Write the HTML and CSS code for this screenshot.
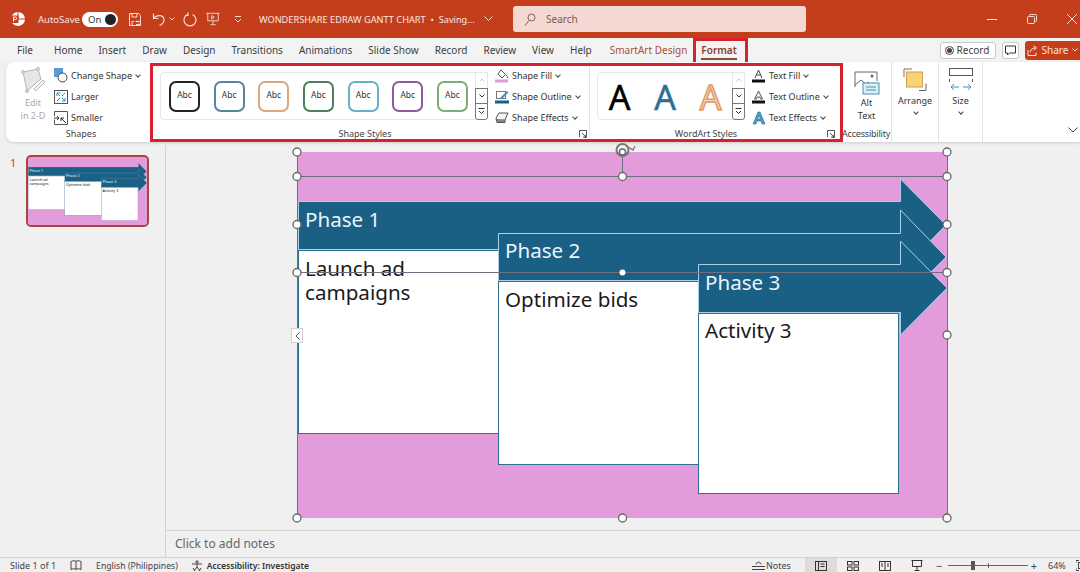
FILE: index.html
```html
<!DOCTYPE html>
<html>
<head>
    <title>WONDERSHARE EDRAW GANTT CHART</title>
    <link rel="stylesheet" href="styles.css">
</head>
<body>
    <header class="titlebar">
        <svg class="app-logo" width="16" height="16" viewBox="0 0 16 16"><circle cx="8" cy="8" r="7" fill="#fff"/><path d="M8 1v7h7" fill="none" stroke="#c43e1c" stroke-width="1"/><rect x="1" y="4.5" width="7.5" height="7.5" rx="1" fill="#c43e1c"/><path d="M3.5 10.5v-4.5h1.8a1.2 1.2 0 0 1 0 2.6h-1.8" fill="none" stroke="#fff" stroke-width="1"/></svg>
        <span class="autosave">AutoSave</span>
        <div class="toggle"><span>On</span><i></i></div>
        <svg class="qa qa-save" width="14" height="15" viewBox="0 0 14 15" fill="none" stroke="#f6ddd6"><path d="M1.5 1.5h9l2 2v10h-11z"/><path d="M4 1.5v3.5h5v-3.5M4 13.5v-4h2"/><path d="M8 9.5h4M8 12.5h4M9 8.5l-1 1 1 1M11 11.5l1 1-1 1"/></svg>
        <svg class="qa qa-undo" width="14" height="14" viewBox="0 0 14 14" fill="none" stroke="#f6ddd6" stroke-width="1.2"><path d="M1.5 1.5v5h5"/><path d="M1.5 6.5c3-4 10-4 10.500 1 .2 2.500-2.500 5-4.500 6"/></svg>
        <svg class="qa-caret" width="6" height="4" viewBox="0 0 6 4" fill="none" stroke="#f6ddd6"><path d="M.5 .5l2.500 2.500 2.500-2.500"/></svg>
        <svg class="qa qa-redo" width="14" height="15" viewBox="0 0 14 15" fill="none" stroke="#f6ddd6" stroke-width="1.2"><path d="M4.500 2.500a6 6 0 1 0 5 0"/><path d="M5 .5v3h-3"/></svg>
        <svg class="qa qa-show" width="14" height="16" viewBox="0 0 16 16" fill="none" stroke="#f6ddd6"><path d="M.5 1.500h15M2 1.500v8.500h12v-8.500M8 10v4M5 14.500h6"/><path d="M6.500 4l3 2-3 2z"/></svg>
        <svg class="qa qa-more" width="8" height="7" viewBox="0 0 8 7" fill="none" stroke="#f6ddd6"><path d="M1 .5h6M1 3l3 3 3-3"/></svg>
        <span class="doc-title">WONDERSHARE EDRAW GANTT CHART &nbsp;•&nbsp; Saving...</span>
        <svg class="title-caret" width="9" height="6" viewBox="0 0 9 6" fill="none" stroke="#f6ddd6"><path d="M.5 .5l4 4 4-4"/></svg>
        <div class="searchbox">
            <svg width="12" height="13" viewBox="0 0 12 13" fill="none" stroke="#8a5a50"><circle cx="7.500" cy="4.500" r="3.500"/><path d="M5 7.500l-4 5"/></svg>
            <span>Search</span>
        </div>
        <div class="win-controls">
            <svg width="10" height="10" viewBox="0 0 10 10" stroke="#f6ddd6" fill="none"><path d="M0 5.500h10"/></svg>
            <svg width="10" height="10" viewBox="0 0 10 10" stroke="#f6ddd6" fill="none"><rect x=".5" y="2.500" width="7" height="7" rx="1"/><path d="M2.500 2.500v-1a1 1 0 0 1 1-1h5a1 1 0 0 1 1 1v5a1 1 0 0 1-1 1h-1"/></svg>
            <svg width="10" height="10" viewBox="0 0 10 10" stroke="#f6ddd6" fill="none"><path d="M0 0l10 10M10 0l-10 10"/></svg>
        </div>
    </header>

    <nav class="tabs">
        <span class="tab tab-file">File</span>
        <span class="tab">Home</span>
        <span class="tab">Insert</span>
        <span class="tab">Draw</span>
        <span class="tab">Design</span>
        <span class="tab">Transitions</span>
        <span class="tab">Animations</span>
        <span class="tab">Slide Show</span>
        <span class="tab">Record</span>
        <span class="tab">Review</span>
        <span class="tab">View</span>
        <span class="tab">Help</span>
        <span class="tab tab-context">SmartArt Design</span>
        <span class="tab tab-format"><b>Format</b></span>
        <div class="tab-actions">
            <div class="btn-record"><i></i>Record</div>
            <div class="btn-comment"><svg width="11" height="11" viewBox="0 0 11 11" fill="none" stroke="#333"><path d="M.5 1h10v7h-6l-2 2v-2h-2z"/></svg></div>
            <div class="btn-share">
                <svg width="11" height="11" viewBox="0 0 11 11" fill="none" stroke="#fbe4dd"><path d="M1 5v5.500h8v-3M3.500 7c0-3 2-4 4.500-4M6.500 .8l3 2.200-3 2.200"/></svg>
                Share
                <svg width="6" height="4" viewBox="0 0 6 4" fill="none" stroke="#fbe4dd"><path d="M.5 .5l2.500 2.500 2.500-2.500"/></svg>
            </div>
        </div>
    </nav>

    <section class="ribbon-wrap">
        <div class="ribbon">
            <div class="group group-shapes">
                <div class="group-body">
                    <div class="edit-2d">
                        <svg width="26" height="28" viewBox="0 0 26 28" fill="#e6e6e6" stroke="#b5b5b5"><path d="M3 5l15-3 3 10-14 12z"/><path d="M14 22l9-9 2 2-9 9z" fill="#f2f2f2"/><circle cx="3" cy="5" r="1.500"/><circle cx="18" cy="2" r="1.500"/><circle cx="7" cy="24" r="1.500"/></svg>
                        <span>Edit<br>in 2-D</span>
                    </div>
                    <div class="cmd-list">
                        <div class="cmd">
                            <svg width="14" height="15" viewBox="0 0 14 15"><rect x="0" y="0" width="9" height="9" fill="#5b9bd5"/><circle cx="8.500" cy="9.500" r="4.500" fill="#fff" stroke="#444"/></svg>
                            Change Shape <em class="caret"></em>
                        </div>
                        <div class="cmd">
                            <svg width="14" height="14" viewBox="0 0 14 14" fill="none"><rect x=".5" y=".5" width="13" height="13" stroke="#555"/><path d="M3 3l3 3M3 3h3M3 3v3M11 11l-3-3M11 11h-3M11 11v-3M11 3l-3 3M3 11l3-3" stroke="#2d8fbd"/></svg>
                            Larger
                        </div>
                        <div class="cmd">
                            <svg width="14" height="14" viewBox="0 0 14 14" fill="none"><path d="M.5 5v-4.500h13v13h-13v-5" stroke="#555"/><path d="M0 7h5M3 5l2 2-2 2M12 12l-5-5M7 10v-3h3" stroke="#333"/></svg>
                            Smaller
                        </div>
                    </div>
                </div>
                <div class="group-label">Shapes</div>
            </div>

            <div class="group group-styles">
                <div class="group-body">
                    <div class="gallery gallery-shapes">
                        <div class="gallery-items">
                            <div class="abc abc-black">Abc</div>
                            <div class="abc abc-blue">Abc</div>
                            <div class="abc abc-orange">Abc</div>
                            <div class="abc abc-green">Abc</div>
                            <div class="abc abc-cyan">Abc</div>
                            <div class="abc abc-purple">Abc</div>
                            <div class="abc abc-lime">Abc</div>
                        </div>
                        <div class="gallery-scroll">
                            <div class="scroll-up"><svg width="6" height="4" viewBox="0 0 6 4" fill="none" stroke="#c8c8c8"><path d="M.5 3.500l2.500-2.500 2.500 2.500"/></svg></div>
                            <div class="scroll-down"><svg width="6" height="4" viewBox="0 0 6 4" fill="none" stroke="#333"><path d="M.5 .5l2.500 2.500 2.500-2.500"/></svg></div>
                            <div class="scroll-more"><svg width="7" height="7" viewBox="0 0 7 7" fill="none" stroke="#333"><path d="M.5 .5h6M1 3l2.500 2.500 2.500-2.500"/></svg></div>
                        </div>
                    </div>
                    <div class="cmd-list cmd-list-format">
                        <div class="cmd">
                            <svg width="14" height="14" viewBox="0 0 14 14"><rect y="10.500" width="13" height="3" fill="#e29bdb"/><path d="M6 1l4.500 4.500-3.500 3.500-4-4z" fill="#fff" stroke="#555"/><path d="M11 6c1 1 2 2 1.500 3" stroke="#555" fill="none"/></svg>
                            Shape Fill <em class="caret"></em>
                        </div>
                        <div class="cmd">
                            <svg width="14" height="14" viewBox="0 0 14 14"><rect y="10.500" width="14" height="3" fill="#1a6085"/><rect x="1.500" y="1.500" width="9" height="7" fill="#fff" stroke="#777"/><path d="M5 8l7-7 1.500 1.500-7 7z" fill="#4f8fb0"/></svg>
                            Shape Outline <em class="caret"></em>
                        </div>
                        <div class="cmd">
                            <svg width="14" height="12" viewBox="0 0 14 12"><path d="M1 6l3-5h9l-3 7h-8z" fill="#f4f4f4" stroke="#555"/><path d="M1 7l1 3.500h8l0-2.500" fill="#888" stroke="#555"/></svg>
                            Shape Effects <em class="caret"></em>
                        </div>
                    </div>
                </div>
                <div class="group-label">Shape Styles<svg class="launcher" width="8" height="8" viewBox="0 0 8 8" fill="none" stroke="#555"><path d="M.5 7v-6.500h7v7h-3M3 3l4 4M7 4.500v2.500h-2.500"/></svg></div>
            </div>

            <div class="group group-wordart">
                <div class="group-body">
                    <div class="gallery gallery-wordart">
                        <div class="gallery-items">
                            <span class="wa wa-black">A</span>
                            <span class="wa wa-blue">A</span>
                            <span class="wa wa-orange">A</span>
                        </div>
                        <div class="gallery-scroll">
                            <div class="scroll-up"><svg width="6" height="4" viewBox="0 0 6 4" fill="none" stroke="#c8c8c8"><path d="M.5 3.500l2.500-2.500 2.500 2.500"/></svg></div>
                            <div class="scroll-down"><svg width="6" height="4" viewBox="0 0 6 4" fill="none" stroke="#333"><path d="M.5 .5l2.500 2.500 2.500-2.500"/></svg></div>
                            <div class="scroll-more"><svg width="7" height="7" viewBox="0 0 7 7" fill="none" stroke="#333"><path d="M.5 .5h6M1 3l2.500 2.500 2.500-2.500"/></svg></div>
                        </div>
                    </div>
                    <div class="cmd-list cmd-list-format">
                        <div class="cmd">
                            <svg width="14" height="14" viewBox="0 0 14 14"><rect y="10.500" width="13" height="3" fill="#111"/><path d="M3 9l3.500-8 3.500 8M4.500 6h4" fill="none" stroke="#444"/></svg>
                            Text Fill <em class="caret"></em>
                        </div>
                        <div class="cmd">
                            <svg width="14" height="14" viewBox="0 0 14 14"><rect y="10.500" width="13" height="3" fill="#111"/><path d="M2.500 9l4-8 4 8h-2l-.8-2h-2.400l-.8 2z" fill="#eee" stroke="#555"/></svg>
                            Text Outline <em class="caret"></em>
                        </div>
                        <div class="cmd">
                            <svg width="14" height="14" viewBox="0 0 14 14"><path d="M1 13l5-12h2l5 12h-3l-1-3h-4l-1 3zM5.500 8h3l-1.500-3.500z" fill="#4a9cc9" stroke="#1f6a8c" stroke-width=".6"/></svg>
                            Text Effects <em class="caret"></em>
                        </div>
                    </div>
                </div>
                <div class="group-label">WordArt Styles<svg class="launcher" width="8" height="8" viewBox="0 0 8 8" fill="none" stroke="#555"><path d="M.5 7v-6.500h7v7h-3M3 3l4 4M7 4.500v2.500h-2.500"/></svg></div>
            </div>

            <div class="group group-access">
                <div class="group-body big-btn">
                    <svg class="big-icon" width="26" height="24" viewBox="0 0 26 24" fill="none"><path d="M1 16v-15h22v9" stroke="#666"/><path d="M1 14l6-5 5 4 3-2" stroke="#666"/><circle cx="18" cy="5" r="1.500" fill="#666"/><rect x="9" y="12" width="16" height="11" fill="#dfeef5" stroke="#3f94b8"/><path d="M12 16h10M12 19h10" stroke="#3f94b8"/></svg>
                    <span>Alt<br>Text</span>
                </div>
                <div class="group-label">Accessibility</div>
            </div>

            <div class="group group-arrange">
                <div class="group-body big-btn">
                    <svg class="big-icon" width="24" height="24" viewBox="0 0 24 24" fill="none"><path d="M1 9v-8h8" stroke="#8a6d2f"/><rect x="3.500" y="4" width="16" height="15" fill="#f9d27c" stroke="#c9a04d"/><path d="M16 22.500h7v-7" stroke="#666"/></svg>
                    <span>Arrange</span>
                    <em class="caret caret-big"></em>
                </div>
            </div>

            <div class="group group-size">
                <div class="group-body big-btn">
                    <svg class="big-icon" width="24" height="24" viewBox="0 0 24 24" fill="none"><rect x=".5" y=".5" width="23" height="7" stroke="#555"/><path d="M.5 11v3M23.500 11v3" stroke="#555"/><path d="M2 19h8M5 16l-3 3 3 3M22 19h-8M19 16l3 3-3 3" stroke="#3f94b8"/></svg>
                    <span>Size</span>
                    <em class="caret caret-big"></em>
                </div>
            </div>

            <svg class="ribbon-collapse" width="10" height="6" viewBox="0 0 10 6" fill="none" stroke="#444"><path d="M.5 .5l4.500 4.500 4.500-4.500"/></svg>
            <div class="mark-styles"></div>
        </div>
    </section>

    <main class="workspace">
        <aside class="thumbs">
            <span class="thumb-num">1</span>
            <div class="thumb">
                <svg width="119" height="67" viewBox="297 152 651 366"><use href="#slide-art"/></svg>
            </div>
        </aside>
        <div class="editor">
            <div class="canvas">
                <div class="pane-toggle"><svg width="5" height="8" viewBox="0 0 5 8" fill="none" stroke="#555"><path d="M4.500 .5l-3.500 3.500 3.500 3.500"/></svg></div>
                <div class="slide">
                    <svg class="slide-svg" width="651" height="366" viewBox="297 152 651 366">
                        <g id="slide-art">
                            <rect x="297" y="152" width="651" height="366" fill="#e29bdb"/>
                            <polygon class="chevron" points="298.500,201.500 900.500,201.500 900.500,179 946,225 900.500,271 900.500,249.500 298.500,249.500"/>
                            <rect class="card" x="298.500" y="250.500" width="200" height="183"/>
                            <polygon class="chevron" points="498.500,233.500 900.500,233.500 900.500,210 946,257 900.500,303 900.500,280.500 498.500,280.500"/>
                            <rect class="card" x="498.500" y="281.500" width="200" height="183"/>
                            <polygon class="chevron" points="698.500,264.500 900.500,264.500 900.500,241 947,288 900.500,335 900.500,312.500 698.500,312.500"/>
                            <rect class="card" x="698.500" y="313.500" width="200" height="180"/>
                            <text class="phase" x="305" y="227">Phase 1</text>
                            <text class="phase" x="505" y="258">Phase 2</text>
                            <text class="phase" x="705" y="290">Phase 3</text>
                            <text class="activity" x="305" y="276">Launch ad</text>
                            <text class="activity" x="305" y="300">campaigns</text>
                            <text class="activity" x="505" y="307">Optimize bids</text>
                            <text class="activity" x="705" y="338">Activity 3</text>
                        </g>
                        <path class="sel-line" d="M297.500 152v366M947.500 152v366M297 176.500h650M297 272.500h650M622.500 152v24"/>
                        <circle class="rotate" cx="622.500" cy="150" r="6"/>
                        <path class="rotate-arm" d="M628 147l5 3 2-4"/>
                        <circle class="handle" cx="297" cy="152" r="4"/>
                        <circle class="handle" cx="622.500" cy="152" r="3"/>
                        <circle class="handle" cx="947" cy="152" r="4"/>
                        <circle class="handle" cx="297" cy="176.500" r="4"/>
                        <circle class="handle" cx="622.500" cy="176.500" r="4"/>
                        <circle class="handle" cx="947" cy="176.500" r="4"/>
                        <circle class="handle" cx="297" cy="224.500" r="4"/>
                        <circle class="handle" cx="947" cy="224.500" r="4"/>
                        <circle class="handle" cx="297" cy="272.500" r="4"/>
                        <circle class="dot" cx="622.500" cy="272.500" r="3"/>
                        <circle class="handle" cx="947" cy="272.500" r="4"/>
                        <circle class="handle" cx="297" cy="335" r="4"/>
                        <circle class="handle" cx="947" cy="335" r="4"/>
                        <circle class="handle" cx="297" cy="518" r="4"/>
                        <circle class="handle" cx="622.500" cy="518" r="4"/>
                        <circle class="handle" cx="947" cy="518" r="4"/>
                    </svg>
                </div>
            </div>
            <div class="notes-pane">Click to add notes</div>
        </div>
    </main>

    <footer class="statusbar">
        <span class="st-slide">Slide 1 of 1</span>
        <svg class="st-book" width="12" height="11" viewBox="0 0 12 11" fill="none" stroke="#444"><path d="M6 1.500c-1-1-3-1-5 0v8c2-1 4-1 5 0 1-1 3-1 5 0v-8c-2-1-4-1-5 0zM6 1.500v8"/></svg>
        <span class="st-lang">English (Philippines)</span>
        <svg class="st-access" width="12" height="12" viewBox="0 0 12 12" fill="none" stroke="#444"><circle cx="6" cy="2" r="1.200"/><path d="M1 4h10M6 4v3M3 11l3-4 3 4M2 8l2 3M10 8l-2 3"/></svg>
        <b class="st-inv">Accessibility: Investigate</b>
        <div class="st-right">
            <div class="st-notes">
                <svg width="13" height="9" viewBox="0 0 13 9" fill="none" stroke="#444"><path d="M3.500 3l3-2 3 2M0 5.500h13M0 8.500h13"/></svg>
                Notes
            </div>
            <div class="view view-active"><svg width="12" height="10" viewBox="0 0 12 10" fill="none" stroke="#333"><rect x=".5" y=".5" width="11" height="9"/><path d="M3.500 .5v9M5.500 3h4M5.500 5.500h4"/></svg></div>
            <div class="view"><svg width="12" height="10" viewBox="0 0 12 10" fill="none" stroke="#333"><rect x=".5" y=".5" width="4.500" height="3.500"/><rect x="7" y=".5" width="4.500" height="3.500"/><rect x=".5" y="6" width="4.500" height="3.500"/><rect x="7" y="6" width="4.500" height="3.500"/></svg></div>
            <div class="view"><svg width="12" height="10" viewBox="0 0 12 10" fill="none" stroke="#333"><rect x=".5" y=".5" width="11" height="9"/><path d="M6 .5v9M2 3h2M2 5h2M8 3h2M8 5h2"/></svg></div>
            <div class="view"><svg width="12" height="11" viewBox="0 0 12 11" fill="none" stroke="#333"><path d="M.5 .5h11M1.500 .5v6h9v-6M6 6.500v4M3.500 10.500h5"/></svg></div>
            <div class="zoom">
                <span class="zoom-sign">−</span>
                <div class="zoom-track"><i class="zoom-mid"></i><i class="zoom-thumb"></i></div>
                <span class="zoom-sign">+</span>
                <span class="zoom-val">64%</span>
                <svg width="12" height="11" viewBox="0 0 12 11" fill="none" stroke="#444"><rect x="2.500" y="2.500" width="7" height="6"/><path d="M0 3v-2.500h3M9 .5h3v2.500M12 8v2.500h-3M3 10.500h-3v-2.500"/></svg>
            </div>
        </div>
    </footer>
</body>
</html>
```

FILE: styles.css
```css
html, body {
    margin: 0;
    height: 572px;
    overflow: hidden;
}
body {
    font-family: "Noto Sans", "Open Sans", sans-serif;
    font-size: 10px;
    color: #333;
    background: #f0f0f0;
}
svg {
    flex: none;
}

/* title bar */
.titlebar {
    height: 38px;
    background: #c43e1c;
    color: #f9e6e0;
    display: flex;
    align-items: center;
    box-sizing: border-box;
    padding-left: 10px;
}
.autosave {
    margin-left: 12px;
    width: 44px;
    font-size: 9.5px;
}
.toggle {
    width: 36px;
    height: 15px;
    background: #fff;
    border-radius: 8px;
    display: flex;
    align-items: center;
    justify-content: space-between;
    padding: 0 2px 0 6px;
    box-sizing: border-box;
    color: #333;
    font-size: 9.5px;
}
.toggle i {
    width: 11px;
    height: 11px;
    background: #222;
    border-radius: 50%;
}
.qa-save { margin-left: 10px; }
.qa-undo { margin-left: 10px; }
.qa-caret { margin-left: 3px; }
.qa-redo { margin-left: 8px; }
.qa-show { margin-left: 9px; }
.qa-more { margin-left: 14px; }
.doc-title {
    margin-left: 17px;
    font-size: 9.200px;
    white-space: nowrap;
}
.title-caret {
    margin-left: 9px;
}
.searchbox {
    position: absolute;
    left: 513px;
    top: 6px;
    width: 293px;
    height: 26px;
    background: #f3d9d2;
    border-radius: 3px;
    display: flex;
    align-items: center;
    gap: 10px;
    padding-left: 11px;
    box-sizing: border-box;
    color: #7c5a52;
    font-size: 10px;
}
.win-controls {
    margin-left: auto;
    display: flex;
    gap: 30px;
    padding-right: 3px;
}

/* tabs */
.tabs {
    height: 24px;
    background: #f3f3f3;
    display: flex;
    align-items: center;
    gap: 16px;
    padding-left: 17px;
    position: relative;
    font-size: 10px;
    color: #3d3d3d;
}
.tab-file {
    margin-right: 5px;
}
.tab-context {
    color: #a8503c;
    margin-left: 2px;
}
.tab-format {
    position: relative;
    margin-left: -2px;
    color: #8c3a2a;
}
.tab-format b {
    font-weight: 600;
}
.tab-format::before {
    content: "";
    position: absolute;
    left: -8px;
    right: -11px;
    top: -5px;
    bottom: -5px;
    border: 3px solid #d9202e;
    border-bottom-width: 0;
}
.tab-format::after {
    content: "";
    position: absolute;
    left: 0;
    right: 0;
    bottom: -3px;
    height: 2px;
    background: #8c4a3e;
}
.tab-actions {
    margin-left: auto;
    display: flex;
    align-items: center;
    gap: 6px;
}
.btn-record, .btn-comment {
    height: 17px;
    background: #fff;
    border: 1px solid #c8c8c8;
    border-radius: 3px;
    box-sizing: border-box;
    display: flex;
    align-items: center;
    justify-content: center;
}
.btn-record {
    width: 56px;
    gap: 3px;
}
.btn-record i {
    width: 5px;
    height: 5px;
    background: #444;
    border-radius: 50%;
    outline: 1px solid #444;
    outline-offset: 1px;
    margin-right: 2px;
}
.btn-comment {
    width: 17px;
}
.btn-share {
    width: 55px;
    height: 19px;
    background: #c43e1c;
    color: #fbe4dd;
    border-radius: 3px 0 0 3px;
    display: flex;
    align-items: center;
    justify-content: center;
    gap: 4px;
}

/* ribbon */
.ribbon-wrap {
    height: 83px;
    padding-left: 6px;
    background: #f0f0f0;
    box-sizing: border-box;
}
.ribbon {
    height: 80px;
    background: #fff;
    border-radius: 8px 0 0 8px;
    box-shadow: 0 1px 3px rgba(0, 0, 0, 0.15);
    display: flex;
    position: relative;
}
.group {
    display: flex;
    flex-direction: column;
    box-sizing: border-box;
    position: relative;
}
.group-body {
    height: 63px;
    padding-top: 3px;
    box-sizing: border-box;
    display: flex;
}
.group-label {
    height: 17px;
    line-height: 17px;
    text-align: center;
    font-size: 9px;
    color: #444;
    white-space: nowrap;
}
.launcher {
    position: absolute;
    right: 2px;
    bottom: 4px;
}
.group-shapes { width: 145px; }
.group-shapes .group-label { padding-left: 5px; }
.group-styles { width: 439px; border-right: 1px solid #e4e4e4; }
.group-styles .group-label { padding-right: 10px; }
.group-wordart { width: 252px; }
.group-wordart .group-label { padding-right: 20px; }
.group-wordart .launcher { right: 7px; }
.group-access { width: 50px; border-right: 1px solid #e4e4e4; }
.group-access .group-label {
    letter-spacing: -0.2px;
    padding-right: 3px;
}
.group-arrange { width: 47px; border-right: 1px solid #e4e4e4; }
.group-size { width: 44px; border-right: 1px solid #e4e4e4; }

.edit-2d {
    width: 48px;
    padding-left: 6px;
    box-sizing: border-box;
    display: flex;
    flex-direction: column;
    align-items: center;
    color: #a8a8a8;
    font-size: 9px;
    line-height: 13px;
    text-align: center;
    padding-top: 2px;
    gap: 1px;
}
.cmd-list {
    display: flex;
    flex-direction: column;
}
.cmd {
    flex: none;
    height: 21px;
    display: flex;
    align-items: center;
    gap: 3px;
    white-space: nowrap;
    font-size: 9px;
}
.caret {
    display: inline-block;
    width: 3px;
    height: 3px;
    border-right: 1px solid #444;
    border-bottom: 1px solid #444;
    transform: rotate(45deg);
    margin: -2px 0 0 1px;
}
.caret-big {
    margin-top: 3px;
}
.cmd-list-format {
    margin-left: 7px;
}
.gallery {
    margin: 7px 0 0 9px;
    height: 48px;
    border: 1px solid #e6e6e6;
    border-radius: 4px;
    box-sizing: border-box;
    display: flex;
}
.gallery-shapes { width: 328px; }
.gallery-wordart { width: 148px; margin-left: 7px; }
.gallery-items {
    flex: 1;
    display: flex;
    align-items: center;
    justify-content: space-between;
    padding: 0 7px 0 8px;
}
.gallery-wordart .gallery-items {
    padding: 2px 8px 0 8px;
}
.gallery-scroll {
    width: 13px;
    margin: -1px -1px -1px 0;
    display: flex;
    flex-direction: column;
}
.gallery-scroll div {
    display: flex;
    align-items: center;
    justify-content: center;
    border: 1px solid #777;
    margin-top: -1px;
    background: #fff;
    flex: 1;
}
.gallery-scroll .scroll-up {
    border-color: #e6e6e6;
    margin-top: 0;
}
.gallery-scroll .scroll-more {
    border-radius: 0 0 3px 3px;
}
.abc {
    width: 31px;
    height: 31px;
    border: 2px solid #000;
    border-radius: 7px;
    box-sizing: border-box;
    display: flex;
    align-items: center;
    justify-content: center;
    padding-bottom: 3px;
    font-size: 8.500px;
    background: #fff;
}
.abc-black { border-color: #222; }
.abc-blue { border-color: #55859f; }
.abc-orange { border-color: #dca67e; }
.abc-green { border-color: #4e7f5a; }
.abc-cyan { border-color: #62b3c9; }
.abc-purple { border-color: #8e5a9c; }
.abc-lime { border-color: #7fae72; }
.wa {
    font-family: "Noto Sans", sans-serif;
    font-size: 34px;
    line-height: 1;
    width: 27px;
    text-align: center;
}
.wa-black {
    color: #000;
    -webkit-text-stroke: 0.500px #000;
}
.wa-blue {
    color: #2a7096;
    -webkit-text-stroke: 0.500px #2a7096;
}
.wa-orange {
    color: #f6d3bb;
    -webkit-text-stroke: 1.500px #e19a67;
}
.big-btn {
    flex-direction: column;
    align-items: center;
    text-align: center;
    font-size: 9px;
    line-height: 13px;
}
.big-icon {
    margin-bottom: 2px;
    margin-top: 3px;
}
.group-access .big-icon {
    margin-top: 6px;
    margin-bottom: 1px;
}
.ribbon-collapse {
    position: absolute;
    right: 2px;
    bottom: 9px;
}
.mark-styles {
    position: absolute;
    left: 144px;
    top: 1px;
    width: 693px;
    height: 79px;
    border: 3px solid #d9202e;
    box-sizing: border-box;
    pointer-events: none;
}

/* workspace */
.workspace {
    height: 412px;
    display: flex;
}
.thumbs {
    width: 166px;
    box-sizing: border-box;
    border-right: 1px solid #d2d2d2;
    display: flex;
    align-items: flex-start;
    padding: 10px 0 0 10px;
    gap: 10px;
}
.thumb-num {
    color: #c43e1c;
    font-size: 11px;
    width: 6px;
}
.thumb {
    width: 123px;
    height: 72px;
    border: 2px solid #a9463a;
    border-radius: 5px;
    box-sizing: border-box;
    overflow: hidden;
    background: #e29bdb;
    display: flex;
    align-items: center;
    justify-content: center;
}
.editor {
    flex: 1;
    display: flex;
    flex-direction: column;
}
.canvas {
    height: 386px;
    padding: 7px 0 0 131px;
    box-sizing: border-box;
    position: relative;
    border-bottom: 1px solid #d2d2d2;
}
.pane-toggle {
    position: absolute;
    left: 125px;
    top: 183px;
    width: 12px;
    height: 15px;
    background: #fff;
    border: 1px solid #d2d2d2;
    box-sizing: border-box;
    display: flex;
    align-items: center;
    justify-content: center;
}
.slide {
    width: 651px;
    height: 366px;
}
.slide-svg {
    overflow: visible;
    display: block;
}
.chevron {
    fill: #1a6085;
    stroke: #a9d0e8;
    stroke-width: 1;
}
.card {
    fill: #fff;
    stroke: #2f6f8f;
    stroke-width: 1;
}
.phase {
    font-family: "Noto Sans", sans-serif;
    font-size: 20.600px;
    fill: #eaf4fa;
}
.activity {
    font-family: "Noto Sans", sans-serif;
    font-size: 20.600px;
    fill: #1a1a1a;
}
.sel-line {
    fill: none;
    stroke: #6e6e7e;
    stroke-width: 1;
}
.handle {
    fill: #fff;
    stroke: #666;
    stroke-width: 1.300;
}
.dot {
    fill: #fff;
}
.rotate {
    fill: none;
    stroke: #777;
    stroke-width: 2;
}
.rotate-arm {
    fill: none;
    stroke: #777;
    stroke-width: 1.300;
}
.notes-pane {
    height: 26px;
    line-height: 25px;
    padding-left: 9px;
    font-size: 12px;
    color: #666;
}

/* status bar */
.statusbar {
    height: 15px;
    border-top: 1px solid #d2d2d2;
    box-sizing: content-box;
    display: flex;
    align-items: center;
    padding-left: 10px;
    font-size: 9px;
    color: #444;
    white-space: nowrap;
}
.st-book { margin-left: 14px; }
.st-lang {
    margin-left: 14px;
    font-size: 8.700px;
}
.st-access { margin-left: 13px; }
.st-inv {
    margin-left: 4px;
    font-size: 8.500px;
    font-weight: 600;
    color: #333;
}
.st-right {
    margin-left: auto;
    width: 328px;
    flex: none;
    overflow: hidden;
    display: flex;
    align-items: center;
    height: 100%;
}
.st-notes {
    width: 53px;
    flex: none;
    display: flex;
    align-items: center;
    gap: 1px;
}
.view {
    width: 32px;
    flex: none;
    height: 15px;
    display: flex;
    align-items: center;
    justify-content: center;
}
.view-active {
    background: #dcdcdc;
}
.zoom {
    flex: none;
    display: flex;
    align-items: center;
    padding-left: 2px;
}
.zoom-sign {
    width: 8px;
    text-align: center;
    font-size: 11px;
}
.zoom-track {
    width: 80px;
    height: 1px;
    background: #666;
    margin: 0 2px 0 5px;
    position: relative;
}
.zoom-mid {
    position: absolute;
    left: 40px;
    top: -2px;
    width: 1px;
    height: 5px;
    background: #666;
}
.zoom-thumb {
    position: absolute;
    left: 23px;
    top: -4px;
    width: 4px;
    height: 9px;
    background: #555;
}
.zoom-val {
    margin-left: 10px;
    margin-right: 10px;
}
```
